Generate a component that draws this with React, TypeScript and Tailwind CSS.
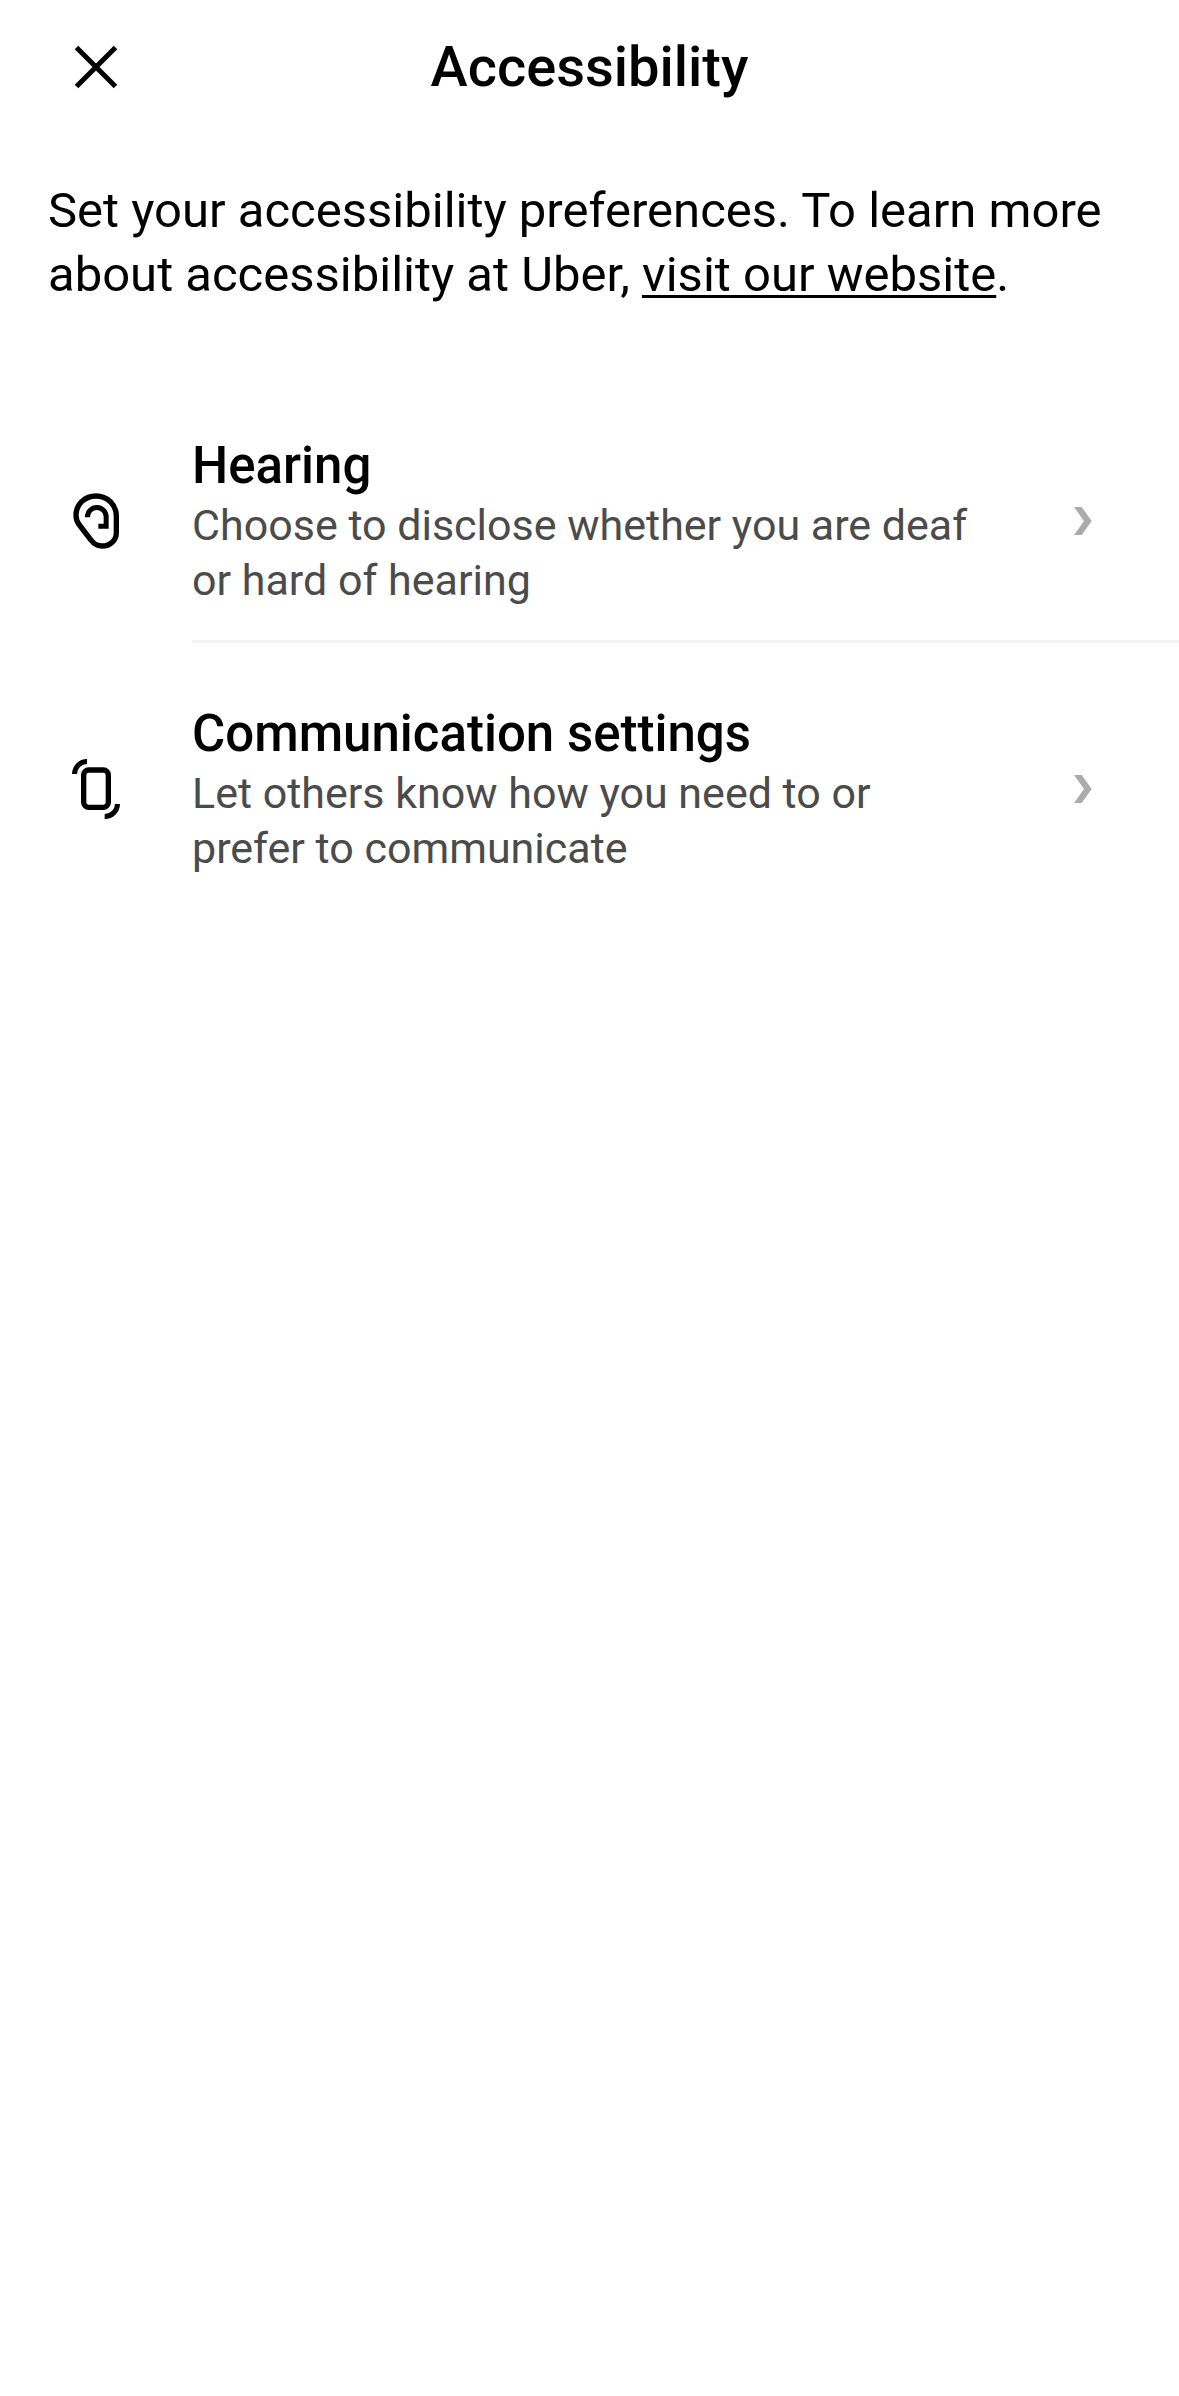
import type { ReactNode } from "react";

type Setting = {
  id: string;
  title: string;
  description: string;
  icon: ReactNode;
};

const CloseIcon = () => (
  <svg className="size-12" viewBox="0 0 48 48" fill="none" aria-hidden="true">
    <path d="M4.5 4.5 L43.5 43.5 M43.5 4.5 L4.5 43.5" stroke="currentColor" strokeWidth="5" />
  </svg>
);

const EarIcon = () => (
  <svg
    className="h-[62px] w-[52px] shrink-0"
    viewBox="30 30 156 186"
    fill="none"
    stroke="currentColor"
    strokeWidth="16"
    aria-hidden="true"
  >
    <path d="M48 106 C48 72 75 48 108 48 C142 48 169 74 169 108 V158 C169 181 150 198 127 198 C113 198 101 191 93 180 L56 132 C50 124 48 116 48 106 Z" />
    <path d="M82.5 112 V110.5 A28 28 0 0 1 138.5 110.5 V138.5 H115" strokeWidth="15" />
  </svg>
);

const PhoneIcon = () => (
  <svg
    className="h-[62px] w-[52px] shrink-0"
    viewBox="30 39 156 186"
    fill="none"
    stroke="currentColor"
    strokeWidth="16"
    aria-hidden="true"
  >
    <rect x="71" y="75" width="74" height="112" rx="15" />
    <path d="M43.5 87 A37.5 37.5 0 0 1 81 49.5" strokeWidth="15" />
    <path d="M172.5 177 A38 38 0 0 1 134 214.5" strokeWidth="15" />
  </svg>
);

const Chevron = () => (
  <svg className="h-7 w-[18px] shrink-0 text-[#ababab]" viewBox="0 0 54 84" aria-hidden="true">
    <path d="M0 0 H23 L53 42 L23 84 H0 L30 42 Z" fill="currentColor" />
  </svg>
);

const settings: Setting[] = [
  {
    id: "hearing",
    title: "Hearing",
    description: "Choose to disclose whether you are deaf or hard of hearing",
    icon: <EarIcon />,
  },
  {
    id: "communication",
    title: "Communication settings",
    description: "Let others know how you need to or prefer to communicate",
    icon: <PhoneIcon />,
  },
];

const SettingRow = ({ setting }: { setting: Setting }) => (
  <li className="group">
    <button
      type="button"
      className="flex w-full items-center gap-[70px] pt-[59px] pr-[87px] pb-8 pl-[70px] text-left"
    >
      {setting.icon}
      <span className="mr-6 flex-1">
        <span className="block text-[51px] leading-[64px] font-medium">{setting.title}</span>
        <span className="block text-[43px] leading-[55px] text-[#4b4b4b]">
          {setting.description}
        </span>
      </span>
      <Chevron />
    </button>
    <div className="ml-48 h-[3px] bg-[#f3f3f3] group-last:hidden" />
  </li>
);

export default function App() {
  return (
    <div className="min-h-screen bg-white font-[Roboto,sans-serif] text-black">
      <header className="grid h-[134px] grid-cols-[1fr_auto_1fr] items-center px-[72px]">
        <button type="button" aria-label="Close" className="size-12">
          <CloseIcon />
        </button>
        <h1 className="text-[56px] leading-[64px] font-medium">Accessibility</h1>
      </header>
      <main>
        <p className="mt-[45px] mb-[68px] px-12 text-[49px] leading-[64px]">
          Set your accessibility preferences. To learn more about accessibility at Uber,{" "}
          <a href="#website" className="underline decoration-[3px] underline-offset-[4px]">
            visit our website
          </a>
          .
        </p>
        <ul>
          {settings.map((setting) => (
            <SettingRow key={setting.id} setting={setting} />
          ))}
        </ul>
      </main>
    </div>
  );
}
